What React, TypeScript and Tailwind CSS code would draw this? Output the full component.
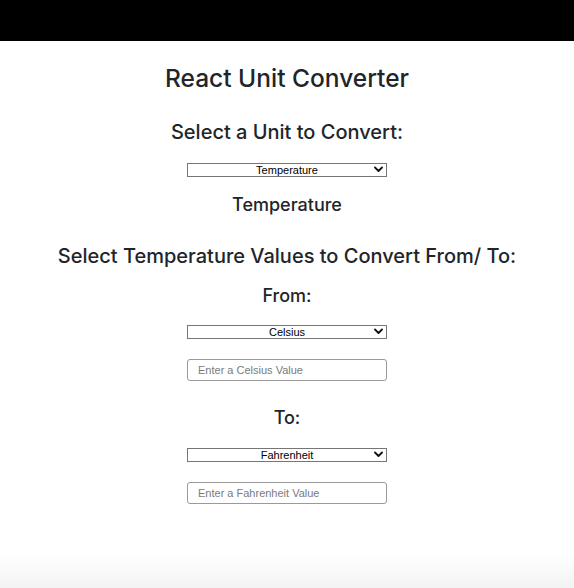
import React, { useState } from 'react';

const Chevron = () => (
    <svg className="pointer-events-none absolute right-[4px] top-[3px]" width="9" height="7" viewBox="0 0 9 7" fill="none">
        <path d="M1 1.5 L4.5 5 L8 1.5" stroke="#111" strokeWidth="1.8" strokeLinecap="round" strokeLinejoin="round" />
    </svg>
);

interface UnitSelectProps {
    value: string;
    options: string[];
    onChange: (v: string) => void;
    className?: string;
}

const UnitSelect: React.FC<UnitSelectProps> = ({ value, options, onChange, className }) => (
    <div className={'relative w-[200px] ' + (className || '')}>
        <select
            value={value}
            onChange={(e) => onChange(e.target.value)}
            className="block h-[14px] w-full appearance-none border border-[#767676] bg-white px-0 py-0 text-center font-['Liberation_Sans',Arial,sans-serif] text-[11px] leading-[12px] text-black [text-align-last:center]"
        >
            {options.map((o) => (
                <option key={o}>{o}</option>
            ))}
        </select>
        <Chevron />
    </div>
);

const ValueInput: React.FC<{ placeholder: string; className?: string }> = ({ placeholder, className }) => (
    <input
        type="text"
        placeholder={placeholder}
        className={
            "block h-[22px] w-[200px] rounded-[3px] border border-[#9a9a9a] bg-white px-[10px] font-['Liberation_Sans',Arial,sans-serif] text-[11px] text-black placeholder:text-[#7a7a7a] " +
            (className || '')
        }
    />
);

export default function App() {
    const [unit, setUnit] = useState('Temperature');
    const [from, setFrom] = useState('Celsius');
    const [to, setTo] = useState('Fahrenheit');

    return (
        <div className="flex min-h-screen flex-col bg-white font-['Inter',sans-serif] text-[#212529]">
            <div className="h-[41px] bg-black" />
            <div className="flex flex-col items-center font-medium">
                <h1 className="mt-[23px] text-[24.5px] leading-[28px]">React Unit Converter</h1>
                <h2 className="mt-[28px] text-[20px] leading-[24px]">Select a Unit to Convert:</h2>
                <UnitSelect
                    className="mt-[19px]"
                    value={unit}
                    onChange={setUnit}
                    options={['Temperature', 'Length', 'Weight', 'Volume']}
                />
                <h3 className="mt-[17px] text-[18px] leading-[22px]">{unit}</h3>
                <h2 className="mt-[28px] text-[20px] leading-[24px]">Select {unit} Values to Convert From/ To:</h2>
                <h3 className="mt-[17px] text-[18px] leading-[22px]">From:</h3>
                <UnitSelect className="mt-[18px]" value={from} onChange={setFrom} options={['Celsius', 'Fahrenheit', 'Kelvin']} />
                <ValueInput className="mt-[20px]" placeholder={`Enter a ${from} Value`} />
                <h3 className="mt-[26px] text-[18px] leading-[22px]">To:</h3>
                <UnitSelect className="mt-[19px]" value={to} onChange={setTo} options={['Fahrenheit', 'Celsius', 'Kelvin']} />
                <ValueInput className="mt-[20px]" placeholder={`Enter a ${to} Value`} />
            </div>
            <div className="flex-1" />
            <div className="h-[34px] bg-gradient-to-b from-white to-[#f3f3f3]" />
        </div>
    );
}
